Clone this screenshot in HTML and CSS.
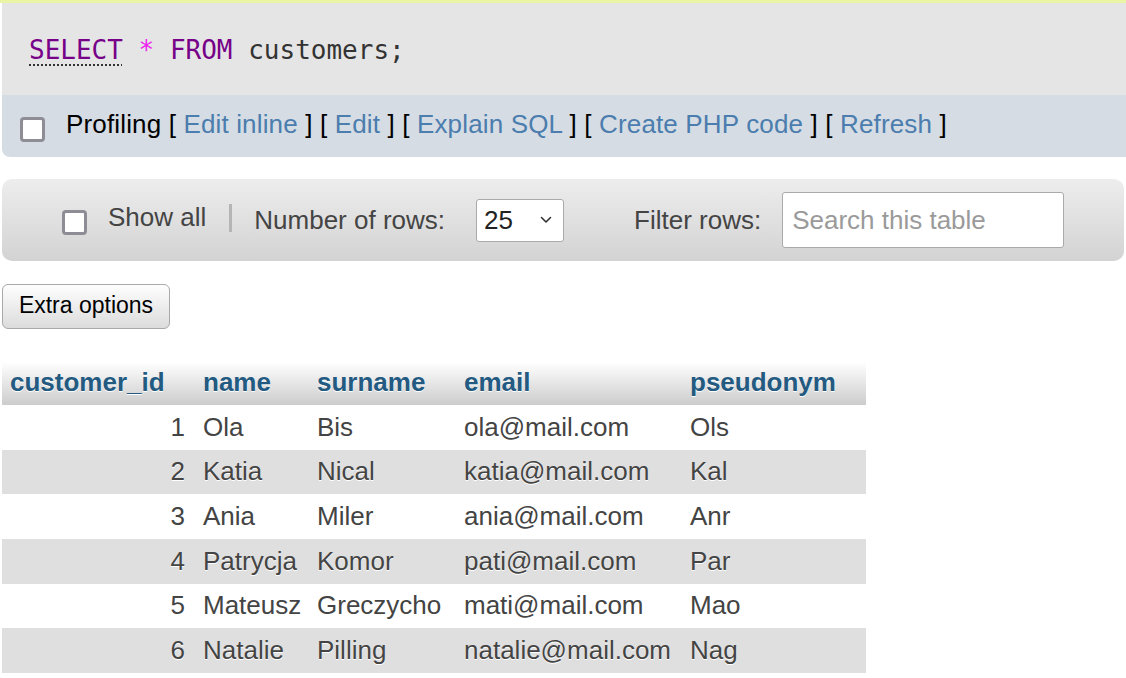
FILE: index.html
```html
<!DOCTYPE html>
<html>
<head>
<meta charset="utf-8">
<link rel="stylesheet" href="styles.css">
</head>
<body>
<div class="topline"></div>
<div class="sqlbox">
  <code class="sql"><span class="kw kw-doc">SELECT</span> <span class="star">*</span> <span class="kw">FROM</span> <span class="ident">customers;</span></code>
</div>
<div class="sqlbar">
  <span class="cbox"></span>
  <span class="barlinks">Profiling [ <a>Edit inline</a> ] [ <a>Edit</a> ] [ <a>Explain SQL</a> ] [ <a>Create PHP code</a> ] [ <a>Refresh</a> ]</span>
</div>
<div class="navbar">
  <span class="cbox nav-cbox"></span>
  <span class="navtext showall">Show all</span>
  <span class="sep"></span>
  <span class="navtext">Number of rows:</span>
  <span class="select"><span class="selval">25</span><svg class="chev" width="12" height="8" viewBox="0 0 12 8"><path d="M1.5 1.5 L6 6 L10.5 1.5" fill="none" stroke="#333" stroke-width="1.6" stroke-linecap="round" stroke-linejoin="round"/></svg></span>
  <span class="navtext filter">Filter rows:</span>
  <span class="search">Search this table</span>
</div>
<div class="btnrow"><span class="btn">Extra options</span></div>
<table class="data">
  <thead>
    <tr><th class="c1">customer_id</th><th class="c2">name</th><th class="c3">surname</th><th class="c4">email</th><th class="c5">pseudonym</th></tr>
  </thead>
  <tbody>
    <tr><td class="num">1</td><td>Ola</td><td>Bis</td><td>ola@mail.com</td><td>Ols</td></tr>
    <tr class="odd"><td class="num">2</td><td>Katia</td><td>Nical</td><td>katia@mail.com</td><td>Kal</td></tr>
    <tr><td class="num">3</td><td>Ania</td><td>Miler</td><td>ania@mail.com</td><td>Anr</td></tr>
    <tr class="odd"><td class="num">4</td><td>Patrycja</td><td>Komor</td><td>pati@mail.com</td><td>Par</td></tr>
    <tr><td class="num">5</td><td>Mateusz</td><td>Greczycho</td><td>mati@mail.com</td><td>Mao</td></tr>
    <tr class="odd"><td class="num">6</td><td>Natalie</td><td>Pilling</td><td>natalie@mail.com</td><td>Nag</td></tr>
  </tbody>
</table>
</body>
</html>
```
FILE: styles.css
```css
html, body {
  margin: 0;
  padding: 0;
  background: #fff;
}
body {
  font-family: "Liberation Sans", Arial, sans-serif;
  font-size: 26px;
  color: #444;
  overflow: hidden;
}
.topline {
  height: 3px;
  background: #e9f5a2;
}
.sqlbox {
  margin-left: 2px;
  height: 92px;
  background: #e5e5e5;
  display: flex;
  align-items: center;
  padding-left: 27px;
  box-sizing: border-box;
}
.sql {
  font-family: "DejaVu Sans Mono", monospace;
  font-size: 26px;
  color: #333;
  white-space: pre;
  position: relative;
  top: 1px;
}
.kw { color: #770088; }
.kw-doc {
  text-decoration: underline dotted #333;
  text-underline-offset: 5px;
  text-decoration-thickness: 1.5px;
}
.star { color: #ee22ee; }
.ident { color: #333; }
.sqlbar {
  margin-left: 2px;
  height: 62px;
  background: #d5dce3;
  border-bottom-left-radius: 8px;
  display: flex;
  align-items: center;
  padding-left: 18px;
  box-sizing: border-box;
}
.cbox {
  display: inline-block;
  width: 25px;
  height: 25px;
  box-sizing: border-box;
  border: 3px solid #8e8d95;
  border-radius: 4px;
  background: #fff;
  flex: none;
}
.sqlbar .cbox { margin-top: 6px; }
.barlinks {
  margin-left: 21px;
  color: #000;
  white-space: nowrap;
  letter-spacing: 0.15px;
  position: relative;
  top: -2px;
}
.barlinks a { color: #4b7dae; }
.navbar {
  margin: 22px 2px 0 2px;
  height: 82px;
  border-radius: 10px;
  background: linear-gradient(#ededed, #d3d3d3);
  display: flex;
  align-items: center;
  padding-left: 60px;
  box-sizing: border-box;
}
.nav-cbox { margin-top: 4px; }
.navtext { color: #444; white-space: nowrap; }
.showall { margin-left: 21px; position: relative; top: -3px; }
.sep {
  width: 3px;
  height: 28px;
  background: #b5b5b5;
  margin: 0 22px 0 23px;
  position: relative;
  top: -2px;
}
.select {
  margin-left: 31px;
  width: 88px;
  height: 43px;
  box-sizing: border-box;
  border: 1px solid #aaa;
  border-radius: 3px;
  background: #fff;
  display: flex;
  align-items: center;
  padding-left: 7px;
  color: #222;
}
.selval { flex: 1; }
.chev { margin-right: 11px; }
.filter { margin-left: 70px; }
.search {
  margin-left: 21px;
  width: 282px;
  height: 56px;
  box-sizing: border-box;
  border: 1px solid #aaa;
  border-radius: 3px;
  background: #fff;
  display: flex;
  align-items: center;
  padding-left: 9px;
  color: #9a9a9a;
}
.btnrow {
  margin: 23px 0 0 2px;
}
.btn {
  display: inline-flex;
  align-items: center;
  justify-content: center;
  width: 168px;
  height: 45px;
  box-sizing: border-box;
  border: 1px solid #a9a9a9;
  border-radius: 6px;
  background: linear-gradient(#fefefe, #dcdcdc);
  color: #000;
  font-size: 23px;
  padding-bottom: 2px;
}
.data {
  margin: 33px 0 0 2px;
  border-collapse: collapse;
  table-layout: fixed;
  width: 864px;
}
.data th, .data td {
  box-sizing: border-box;
  padding: 0 8px;
  text-align: left;
  white-space: nowrap;
  overflow: visible;
}
.data th {
  height: 43px;
  background: linear-gradient(#ffffff, #cccccc);
  color: #235a81;
  font-weight: bold;
  text-shadow: 0 1px 0 #fff;
  padding-bottom: 3px;
}
.data th.c1 { width: 193px; }
.data th.c2 { width: 114px; }
.data th.c3 { width: 147px; }
.data th.c4 { width: 226px; }
.data th.c5 { width: 184px; }
.data td {
  height: 44.67px;
  color: #444;
  text-shadow: 0 1px 0 #fff;
}
.data td.num { text-align: right; padding-right: 10px; }
.data tr.odd td { background: #dfdfdf; }
```
